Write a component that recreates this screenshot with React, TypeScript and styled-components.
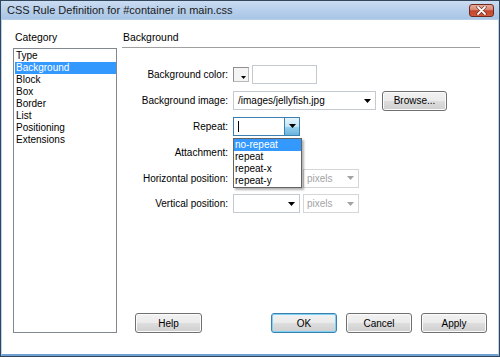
import React from "react";
import styled, { createGlobalStyle } from "styled-components";

const Global = createGlobalStyle`
  html, body { margin: 0; padding: 0; }
  body {
    width: 500px; height: 357px; overflow: hidden; background: #fff;
    font-family: "Liberation Sans", Arial, sans-serif; font-size: 10px; color: #000;
  }
  * { box-sizing: border-box; }
`;

const Window = styled.div`
  width: 500px;
  height: 357px;
  display: flex;
  flex-direction: column;
  border: 1px solid #33475c;
  background: #fff;
`;

const TitleBar = styled.div`
  height: 19px;
  flex: none;
  display: flex;
  align-items: center;
  padding: 0 5px 0 6px;
  background: linear-gradient(#cadcf1, #b4cdea 60%, #a9c5e6);
  border-bottom: 1px solid #b9cfe8;
`;

const Title = styled.div`
  flex: 1;
  font-size: 11px;
  color: #1a1a1a;
  white-space: nowrap;
`;

const CloseBtn = styled.div`
  width: 25px;
  height: 13px;
  border: 1px solid #6e2a1d;
  border-radius: 3px;
  background: linear-gradient(#e7ab9c 0%, #d88571 45%, #c0442b 52%, #cf5a3d 100%);
  display: flex;
  align-items: center;
  justify-content: center;
`;

const Body = styled.div`
  flex: 1;
  display: flex;
  padding: 12px 11px 21px 11px;
  border-left: 1px solid #b9d1ec;
  border-right: 1px solid #b9d1ec;
  border-bottom: 2px solid #6fa1d4;
  min-height: 0;
`;

const LeftCol = styled.div`
  width: 104px;
  display: flex;
  flex-direction: column;
`;

const Caption = styled.div<{ $indent?: number }>`
  height: 12px;
  line-height: 12px;
  font-size: 10.4px;
  padding-left: ${(p) => p.$indent ?? 0}px;
`;

const CatList = styled.div`
  margin-top: 4px;
  flex: 1;
  border: 1px solid #828790;
  padding-top: 1px;
  background: #fff;
`;

const CatItem = styled.div<{ $sel?: boolean }>`
  height: 12px;
  line-height: 12px;
  padding-left: 1px;
  margin: 0 0 0 1px;
  background: ${(p) => (p.$sel ? "#3399ff" : "transparent")};
  color: ${(p) => (p.$sel ? "#fff" : "#000")};
`;

const RightCol = styled.div`
  flex: 1;
  margin-left: 5px;
  display: flex;
  flex-direction: column;
`;

const Rule = styled.div`
  height: 1px;
  margin: 3px 7px 0 0;
  background: #a0a0a0;
`;

const Form = styled.div`
  margin-top: 14px;
  display: grid;
  grid-template-columns: 106px 1fr;
  grid-auto-rows: 25.8px;
  column-gap: 5px;
`;

const Label = styled.div`
  display: flex;
  align-items: center;
  justify-content: flex-end;
  white-space: nowrap;
`;

const Field = styled.div`
  display: flex;
  align-items: center;
  position: relative;
`;

const Swatch = styled.div`
  width: 16px;
  height: 15px;
  border: 1px solid #8f8f8f;
  border-right-color: #b8b8b8;
  border-bottom-color: #b8b8b8;
  background: #f4f4f4;
  display: flex;
  align-items: flex-end;
  justify-content: flex-end;
  padding: 0 2px 2px 0;
`;

const TextBox = styled.div<{ $w: number }>`
  width: ${(p) => p.$w}px;
  height: 19px;
  margin-left: 3px;
  border: 1px solid #c5c9d0;
  background: #fff;
`;

const Combo = styled.div<{ $w: number; $active?: boolean; $disabled?: boolean }>`
  width: ${(p) => p.$w}px;
  height: 19px;
  display: flex;
  align-items: stretch;
  border: 1px solid ${(p) => (p.$active ? "#3c7fb1" : p.$disabled ? "#d6d6d6" : "#c5c9d0")};
  background: #fff;
  color: ${(p) => (p.$disabled ? "#a3a3a3" : "#000")};
  flex: none;
`;

const ComboText = styled.div<{ $pad?: number }>`
  flex: 1;
  display: flex;
  align-items: center;
  padding-left: ${(p) => p.$pad ?? 4}px;
  white-space: nowrap;
  overflow: hidden;
`;

const ArrowBox = styled.div<{ $active?: boolean }>`
  width: 15px;
  display: flex;
  align-items: center;
  justify-content: center;
  ${(p) =>
    p.$active
      ? `background: linear-gradient(#e5f4fc, #c4e5f6 50%, #98d1ef 52%, #68b3db);
         border-left: 1px solid #3c7fb1;`
      : ""}
`;

const Caret = styled.span`
  display: inline-block;
  width: 1px;
  height: 11px;
  background: #000;
`;

const Gap = styled.div<{ $w: number }>`
  width: ${(p) => p.$w}px;
  flex: none;
`;

const DropList = styled.div`
  position: absolute;
  left: 0;
  top: calc(100% - 1px);
  width: 69px;
  border: 1px solid #646464;
  background: #fff;
  box-shadow: 2px 2px 2px rgba(0, 0, 0, 0.3);
  z-index: 5;
`;

const DropItem = styled.div<{ $sel?: boolean }>`
  height: 12px;
  line-height: 12px;
  padding-left: 1px;
  background: ${(p) => (p.$sel ? "#3399ff" : "#fff")};
  color: ${(p) => (p.$sel ? "#fff" : "#000")};
`;

const Spacer = styled.div`
  flex: 1;
`;

const ButtonRow = styled.div`
  display: flex;
  gap: 9px;
  padding-left: 13px;
`;

const Button = styled.div<{ $w: number; $focus?: boolean }>`
  width: ${(p) => p.$w}px;
  height: 20px;
  border: 1px solid ${(p) => (p.$focus ? "#3c7fb1" : "#707070")};
  border-radius: 3px;
  background: linear-gradient(#f2f2f2, #ebebeb 48%, #dddddd 52%, #cfcfcf);
  box-shadow: ${(p) => (p.$focus ? "inset 0 0 0 1px #7cd2f5" : "inset 0 0 0 1px #fbfbfb")};
  display: flex;
  align-items: center;
  justify-content: center;
`;

const Arrow = ({ color = "#000" }: { color?: string }) => (
  <svg width="7" height="4" viewBox="0 0 7 4">
    <polygon points="0,0 7,0 3.5,4" fill={color} />
  </svg>
);

const SmallArrow = () => (
  <svg width="5" height="3" viewBox="0 0 5 3">
    <polygon points="0,0 5,0 2.5,3" fill="#000" />
  </svg>
);

const categories = ["Type", "Background", "Block", "Box", "Border", "List", "Positioning", "Extensions"];

export default function App() {
  return (
    <>
      <Global />
      <Window>
        <TitleBar>
          <Title>CSS Rule Definition for #container in main.css</Title>
          <CloseBtn>
            <svg width="11" height="9" viewBox="0 0 11 9">
              <path d="M2 1 L9 8 M9 1 L2 8" stroke="#5a1a10" strokeWidth="3" strokeLinecap="round" />
              <path d="M2 1 L9 8 M9 1 L2 8" stroke="#fff" strokeWidth="1.8" strokeLinecap="round" />
            </svg>
          </CloseBtn>
        </TitleBar>
        <Body>
          <LeftCol>
            <Caption $indent={2}>Category</Caption>
            <CatList>
              {categories.map((c) => (
                <CatItem key={c} $sel={c === "Background"}>
                  {c}
                </CatItem>
              ))}
            </CatList>
          </LeftCol>
          <RightCol>
            <Caption $indent={1}>Background</Caption>
            <Rule />
            <Form>
              <Label>Background color:</Label>
              <Field>
                <Swatch>
                  <SmallArrow />
                </Swatch>
                <TextBox $w={65} />
              </Field>

              <Label>Background image:</Label>
              <Field>
                <Combo $w={143}>
                  <ComboText>/images/jellyfish.jpg</ComboText>
                  <ArrowBox>
                    <Arrow />
                  </ArrowBox>
                </Combo>
                <Gap $w={6} />
                <Button $w={65}>Browse...</Button>
              </Field>

              <Label>Repeat:</Label>
              <Field>
                <Combo $w={67} $active>
                  <ComboText>
                    <Caret />
                  </ComboText>
                  <ArrowBox $active>
                    <Arrow />
                  </ArrowBox>
                </Combo>
                <DropList>
                  <DropItem $sel>no-repeat</DropItem>
                  <DropItem>repeat</DropItem>
                  <DropItem>repeat-x</DropItem>
                  <DropItem>repeat-y</DropItem>
                </DropList>
              </Field>

              <Label>Attachment:</Label>
              <Field>
                <Combo $w={67}>
                  <ComboText />
                  <ArrowBox>
                    <Arrow />
                  </ArrowBox>
                </Combo>
              </Field>

              <Label>Horizontal position:</Label>
              <Field>
                <Combo $w={67}>
                  <ComboText />
                  <ArrowBox>
                    <Arrow />
                  </ArrowBox>
                </Combo>
                <Gap $w={3} />
                <Combo $w={56} $disabled>
                  <ComboText $pad={3}>pixels</ComboText>
                  <ArrowBox>
                    <Arrow color="#a3a3a3" />
                  </ArrowBox>
                </Combo>
              </Field>

              <Label>Vertical position:</Label>
              <Field>
                <Combo $w={67}>
                  <ComboText />
                  <ArrowBox>
                    <Arrow />
                  </ArrowBox>
                </Combo>
                <Gap $w={3} />
                <Combo $w={56} $disabled>
                  <ComboText $pad={3}>pixels</ComboText>
                  <ArrowBox>
                    <Arrow color="#a3a3a3" />
                  </ArrowBox>
                </Combo>
              </Field>
            </Form>
            <Spacer />
            <ButtonRow>
              <Button $w={67}>Help</Button>
              <Spacer />
              <Button $w={66} $focus>
                OK
              </Button>
              <Button $w={66}>Cancel</Button>
              <Button $w={66}>Apply</Button>
            </ButtonRow>
          </RightCol>
        </Body>
      </Window>
    </>
  );
}
